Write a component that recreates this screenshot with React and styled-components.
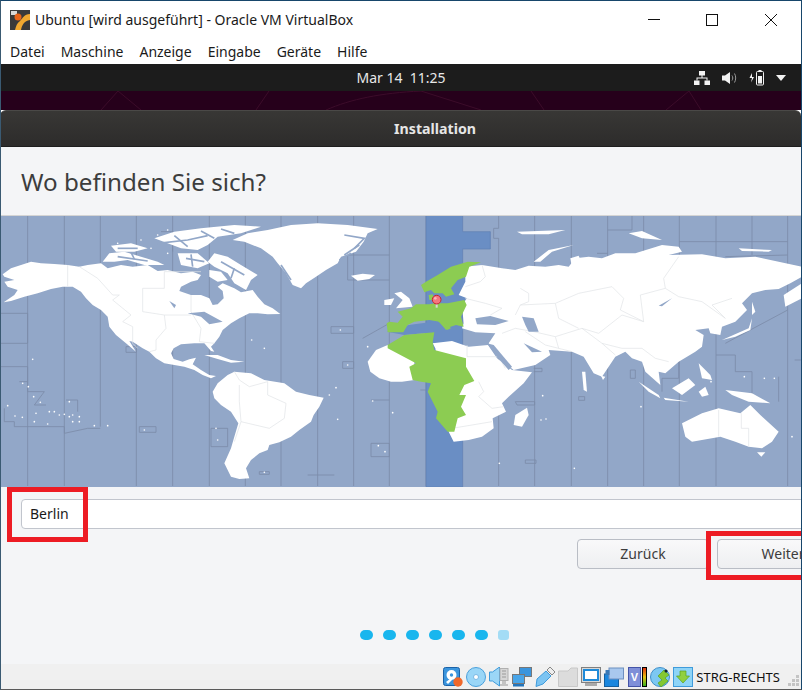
import React from "react";
import styled, { createGlobalStyle } from "styled-components";

const Global = createGlobalStyle`
	html, body {
		margin: 0;
		padding: 0;
		background: #fff;
	}
	body {
		font-family: "Noto Sans", "Open Sans", sans-serif;
	}
`;

const Frame = styled.div`
	position: relative;
	width: 802px;
	height: 690px;
	box-sizing: border-box;
	border: 1px solid #17466b;
	border-bottom-color: #5a5a5a;
	border-left-color: #3a5a72;
	overflow: hidden;
	display: flex;
	flex-direction: column;
	background: #fff;
`;

const TitleBar = styled.div`
	height: 31px;
	box-sizing: border-box;
	padding: 6px 0 0 9px;
	display: flex;
	align-items: center;
	flex-shrink: 0;
`;

const Caption = styled.div`
	flex: 1;
	margin-left: 5px;
	font-size: 14px;
	color: #1a1a1a;
	white-space: nowrap;
`;

const WinButton = styled.div`
	width: 58.5px;
	display: flex;
	align-items: center;
	justify-content: center;
`;

const WinButtons = styled.div`
	display: flex;
	margin-right: 1px;
`;

const MenuBar = styled.div`
	height: 32px;
	display: flex;
	align-items: center;
	gap: 16px;
	padding: 7px 0 0 9px;
	box-sizing: border-box;
	font-size: 14px;
	color: #1a1a1a;
	flex-shrink: 0;
`;

const TopBar = styled.div`
	height: 27px;
	background: #1c1c1c;
	position: relative;
	display: flex;
	align-items: center;
	justify-content: center;
	flex-shrink: 0;
`;

const Clock = styled.div`
	color: #e8e8e8;
	font-size: 14px;
	white-space: pre;
	padding-bottom: 1px;
`;

const Tray = styled.div`
	position: absolute;
	right: 15px;
	top: 0;
	height: 27px;
	display: flex;
	align-items: center;
	gap: 12px;
`;

const Wallpaper = styled.div`
	height: 19px;
	background: #26001b;
	flex-shrink: 0;
	svg { display: block; }
`;

const InstallerHead = styled.div`
	height: 37px;
	background: linear-gradient(#383735, #2d2c2b);
	border-top: 1px solid #4a4947;
	border-bottom: 1px solid #1e1e1e;
	border-radius: 6px 6px 0 0;
	box-sizing: border-box;
	display: flex;
	align-items: center;
	justify-content: center;
	color: #e6e6e6;
	font-size: 14.2px;
	font-weight: 700;
	flex-shrink: 0;
	margin-left: -1px;
	padding-left: 69px;
`;

const Body = styled.div`
	flex: 1;
	background: #f4f5f7;
	display: flex;
	flex-direction: column;
	overflow: hidden;
`;

const Heading = styled.h1`
	margin: 0;
	height: 69px;
	box-sizing: border-box;
	padding: 17px 0 0 20px;
	font-size: 24.2px;
	line-height: 36px;
	font-weight: 400;
	color: #3d3d3d;
	border-bottom: 1px solid #d4d4d4;
	flex-shrink: 0;
`;

const MapBox = styled.div`
	height: 271px;
	flex-shrink: 0;
	background: #92a7c8;
	overflow: hidden;
	svg {
		display: block;
		filter: blur(0.35px);
	}
`;

const SearchRow = styled.div`
	padding: 12px 0 0 20px;
	flex-shrink: 0;
`;

const Search = styled.div`
	width: 830px;
	height: 30px;
	box-sizing: border-box;
	background: #fff;
	border: 1px solid #c1c5cd;
	border-radius: 4px;
	padding: 0 0 2px 8px;
	display: flex;
	align-items: center;
	font-size: 14px;
	color: #1a1a1a;
`;

const Buttons = styled.div`
	display: flex;
	justify-content: flex-end;
	gap: 8px;
	margin: 10px -48px 0 0;
	flex-shrink: 0;
`;

const Button = styled.div`
	width: 132px;
	height: 30px;
	box-sizing: border-box;
	border: 1px solid #b9bdc5;
	border-radius: 4px;
	background: linear-gradient(#f9f9fa, #eeeff1);
	padding-bottom: 2px;
	display: flex;
	align-items: center;
	justify-content: center;
	font-size: 14px;
	color: #3d3d3d;
`;

const Dots = styled.div`
	display: flex;
	align-items: center;
	gap: 10px;
	margin-top: 61px;
	padding-left: 359px;
	flex-shrink: 0;
`;

const Dot = styled.span`
	width: ${p => (p.$todo ? 11 : 13)}px;
	height: 10px;
	border-radius: ${p => (p.$todo ? 3 : 5)}px;
	background: ${p => (p.$todo ? "#a3dcf5" : "#19b6ee")};
`;

const StatusBar = styled.div`
	height: 25px;
	background: #f0f0f0;
	display: flex;
	align-items: center;
	justify-content: flex-end;
	padding-right: 1px;
	flex-shrink: 0;
`;

const StatusIcon = styled.svg`
	width: ${p => p.width || 20}px;
	height: 20px;
	margin-left: ${p => p.$gap ?? 3}px;
	flex-shrink: 0;
`;

const HostKey = styled.div`
	font-size: 13px;
	color: #111;
	margin-left: 3px;
	white-space: nowrap;
`;

const Grip = styled.svg`
	width: 12px;
	height: 12px;
	margin: 8px 0 0 8px;
`;

const Callout = styled.div`
	position: absolute;
	border: 5px solid #ed1c24;
	box-sizing: border-box;
	pointer-events: none;
`;

const BerlinCallout = styled(Callout)`
	left: 6px;
	top: 486px;
	width: 81px;
	height: 55px;
`;

const NextCallout = styled(Callout)`
	left: 705px;
	top: 530px;
	width: 120px;
	height: 49px;
`;

const VBoxLogo = () => (
	<svg width="20" height="20" viewBox="0 0 20 20">
		<rect width="20" height="20" fill="#3a3a3a" />
		<rect x="1" y="1" width="6" height="4" fill="#d8d8d8" />
		<path d="M20 4 C14 4 13 8 10 11 C7 13 6 16 5 20 L11 20 C12 15 14 11 20 10 Z" fill="#f0a830" />
		<circle cx="8" cy="7" r="3.5" fill="#e8641a" />
	</svg>
);

const NetIcon = () => (
	<svg width="16" height="14" viewBox="0 0 16 14" fill="#f2f2f2">
		<rect x="5" y="0" width="6" height="4.5" />
		<rect x="0" y="9.5" width="5.5" height="4.5" />
		<rect x="10.5" y="9.5" width="5.5" height="4.5" />
		<path d="M7.5 4h1v2.5h5v3h-1v-2h-9v2h-1v-3h5z" />
	</svg>
);

const SpeakerIcon = () => (
	<svg width="15" height="14" viewBox="0 0 15 14" fill="none">
		<path d="M0 4.5h3L8 1v12L3 9.5H0z" fill="#f2f2f2" />
		<path d="M10 4.5c1 1.5 1 3.5 0 5M12.5 2.5c1.6 2.8 1.6 6.2 0 9" stroke="#9a9a9a" strokeWidth="1" />
	</svg>
);

const BatteryIcon = () => (
	<svg width="15" height="16" viewBox="0 0 15 16" fill="none">
		<path d="M3 3L0.5 8H3L2 12.5L5 7H3z" fill="#f2f2f2" />
		<rect x="7.5" y="1.5" width="7" height="13.5" rx="1" stroke="#f2f2f2" strokeWidth="1" />
		<rect x="9.5" y="0" width="3" height="1.5" fill="#f2f2f2" />
		<rect x="9" y="6" width="4" height="7.5" fill="#f2f2f2" />
	</svg>
);

const Caret = () => (
	<svg width="10" height="6" viewBox="0 0 10 6">
		<path d="M0 0h10L5 6z" fill="#f2f2f2" />
	</svg>
);

// the map is traced at 3x; west half starts at x 0, east half at x 1203
const westZones = [
	"M80 0V813", "M190 0V813", "M298 0V635", "M406 0V813", "M515 0V813", "M625 0V813", "M733 0V813", "M840 0V813", "M950 0V813",
	"M1058 0V813", "M1165 0V813", "M0 295H80V385H0", "M0 455H80V530H130L100 570H135", "M10 580V620H40V635H190V655L260 640H298",
	"M480 50H515V110", "M1165 120H1040V195H1165", "M1110 555H1165", "M1110 685H1165V725H1110Z", "M990 335H1058V355H990Z",
	"M630 640H680V695H630Z", "M415 635H465V652H415Z", "M1025 440H1058V460H1025Z", "M375 395H406V412H375Z", "M55 500H80", "M195 555H230V590",
	"M920 780H1000", "M1085 370L1165 325", "M775 770H805V778H775Z",
];

const eastZones = [
	"M72 0V813", "M290 0V40H275V70H290V813", "M398 0V813", "M508 0V813", "M617 0V45H690V0M617 45V813", "M725 0V813", "M832 0V813", "M942 0V813",
	"M1050 0V80H942M1157 0V813", "M832 80H942", "M1050 80V120", "M1050 80H1157", "M1157 120L970 125", "M1157 285L970 385", "M1000 420H942", "M1000 420V470H1050V560",
	"M1130 485V560", "M830 440V490H780V530", "M340 560H398V570H345Z", "M370 735H402V745H370Z", "M685 465H700V490H685Z", "M530 545H548V556H530Z",
	"M1178 435H1203V480", "M395 460H420V470H395", "M55 525H72", "M585 115H617",
];

const westLand = [
	// north america
	"M5 178L30 160 60 150 90 140 120 145 160 147 200 150 235 155 260 150 300 145 320 160 360 150 395 155 440 150 470 168 500 165 540 175 575 170 600 180 590 195 570 200 540 215 535 228 570 240 600 240 625 250 635 270 650 268 668 250 665 228 650 215 665 205 700 220 720 232 755 225 770 245 790 268 815 280 838 297 800 298 770 295 745 295 715 310 690 325 665 345 655 365 640 385 630 395 640 410 630 408 610 385 580 385 540 388 518 400 510 415 518 432 545 440 565 433 585 428 575 448 600 465 625 480 645 483 630 490 605 480 580 465 550 455 520 450 490 445 465 430 445 410 425 400 395 380 385 378 405 410 375 385 345 360 325 335 320 305 300 285 275 270 255 250 240 230 215 215 185 215 150 222 110 235 70 245 30 258 8 262 40 240 50 225 20 215 10 200 40 195 10 185Z",
	// arctic islands
	"M305 140L325 115 370 110 420 125 470 140 490 150 430 150 380 135 340 140Z",
	"M330 92L390 85 440 100 400 110 345 110Z",
	"M460 70L520 50 600 40 700 30 780 35 720 55 650 65 620 90 590 105 540 100 500 85Z",
	"M530 115L590 115 625 145 590 160 540 150Z",
	"M640 115L680 125 720 150 770 180 750 195 735 225 700 205 680 175 640 155 620 140Z",
	"M625 165L660 170 680 195 650 200 625 185Z",
	// caribbean
	"M610 420L650 420 690 435 730 440 690 443 650 432Z",
	// greenland, iceland
	"M695 75L740 55 800 45 870 30 950 25 1040 30 1130 42 1100 55 1088 80 1065 110 1020 125 1010 145 975 165 945 185 915 205 900 220 875 210 855 175 830 145 815 125 780 100 730 80Z",
	"M1050 182L1085 176 1122 180 1105 192 1070 197Z",
	// south america
	"M635 530L650 505 680 480 700 470 750 475 790 495 850 505 885 530 925 540 968 548 955 575 938 600 930 620 895 645 870 665 835 682 805 690 800 705 775 715 750 735 735 760 745 790 715 792 690 785 670 745 690 700 700 665 712 625 690 590 660 570 640 550Z",
	// west africa
	"M1100 440L1125 405 1160 390 1240 395 1240 495 1203 500 1170 500 1135 490 1108 470Z",
];

const eastLand = [
	// east africa
	"M92 385L150 378 200 395 258 390 285 430 330 465 390 472 365 505 320 545 300 565 312 590 272 610 275 640 240 665 200 675 155 680 140 650 100 400Z",
	"M335 630L340 600 375 578 380 600 360 635Z",
	// eurasia
	"M190 155L240 150 300 160 340 165 380 152 430 155 470 150 500 155 520 130 560 125 600 130 640 115 700 115 780 90 830 95 840 110 800 120 900 118 970 130 1060 125 1130 140 1200 155 1200 185 1165 205 1130 222 1090 225 1050 235 1020 265 1035 285 1000 320 960 335 955 360 925 355 920 340 880 345 905 360 900 395 880 410 830 440 790 475 770 470 775 510 730 470 720 440 690 430 670 410 640 425 600 485 575 475 545 425 510 410 440 405 445 420 400 450 335 465 290 430 260 385 280 355 220 352 180 340 185 325 180 270 195 250 170 240 190 200Z",
	// russian arctic
	"M395 140L440 105 515 90 450 110 415 140Z",
	"M680 55L720 48 780 75 720 70Z",
	"M1010 100L1110 105 1100 110 1020 108Z",
	"M505 130L530 122 550 170 510 160Z",
	"M345 50L490 45 440 58 360 58Z",
	// far east
	"M1145 240L1200 205 1200 250 1150 275Z",
	"M1050 260L1060 290 1050 300Z",
	"M960 375L1040 340 1050 310 1045 345 1000 365Z",
	// sri lanka, indonesia, philippines
	"M597 482L610 485 603 495Z",
	"M710 500L770 540 775 550 740 530Z",
	"M785 548L860 560 790 555Z",
	"M810 520L860 490 880 510 840 540Z",
	"M890 445L925 480 930 495 900 490Z",
	"M890 530L910 515 920 540 900 545Z",
	"M970 525L1050 535 1105 565 1040 560 990 540Z",
	"M540 470L550 470 555 530 545 525Z",
	// australia
	"M840 625L900 595 950 580 1015 595 1045 570 1075 600 1130 650 1110 680 1080 700 1040 695 1000 680 955 665 870 680 850 665Z",
	"M1065 712L1090 712 1078 725Z",
	// british isles
	"M-23 235L-3 230 22 250 32 275 -18 280 2 255Z",
	"M-53 255L-23 250 -33 270 -53 270Z",
];

// straits cut through the arctic islands
const channels = [
	"M470 85L560 75 620 62", "M520 62L560 95", "M600 48L640 70", "M660 42L700 55", "M350 100L410 100",
	"M350 125L440 138", "M390 112L400 132", "M555 130L610 140", "M570 118L575 155", "M660 140L730 180", "M700 160L690 190",
	"M1030 60L1090 70 1060 100", "M1030 120L1075 90", "M1015 135L1050 115", "M840 150L870 195",
];

const eastBorders = [
	"M240 150L250 185 235 200 190 215", "M190 250L250 265 300 280 265 300", "M355 220L380 235 380 260 355 270 340 300",
	"M355 270L460 265 530 235 630 215 665 250 655 285 725 320 715 240 790 220 785 190 830 125",
	"M790 220L830 245 900 260 970 310 930 270 990 250", "M460 265L470 310 530 340", "M725 320L660 300 590 355 540 340",
	"M340 340L395 350 460 365 470 400", "M460 365L540 340 600 385 660 400 720 400 760 430 800 440", "M600 385L640 420",
	"M195 425H290L310 460", "M230 500L245 530 230 545 270 580 305 575", "M150 640L270 620", "M195 390V425",
	"M950 585V665", "M1018 595V640H1040V695", "M370 350L430 390 510 410", "M300 355L340 340",
];

const westBorders = [
	"M200 150V215", "M235 155L290 190 335 240 355 240 335 255 390 300 365 320 395 335V385L410 400",
	"M425 220H490V170H600", "M425 220V290L490 300 495 340 465 375V405L445 410", "M570 240V290L600 340 595 380 640 385",
	"M490 300H570", "M700 470L715 495 745 515 800 500V540L855 565 850 610 805 640 720 620 715 560 715 510", "M720 620L700 680",
];

const specks = [
	[65, 505], [82, 515], [98, 545], [118, 562], [205, 560], [20, 572], [42, 603], [64, 607], [105, 595], [145, 590], [160, 590], [175, 600], [190, 598], [205, 605], [215, 600], [235, 605], [215, 620], [235, 620], [140, 627], [100, 620], [280, 632], [320, 632], [95, 433],
	[430, 645], [645, 640], [650, 675], [1010, 613], [985, 540], [1005, 518], [1132, 692], [1152, 710], [790, 772], [1018, 345], [1040, 450], [1100, 395], [1115, 558], [1175, 593],
	[1620, 615], [1635, 612], [1495, 745], [1720, 760], [1920, 575], [1625, 542], [2130, 500], [2230, 485], [2290, 490], [2320, 490], [2373, 665],
	[470, 60], [500, 45], [450, 100], [500, 115], [350, 85], [420, 75], [790, 400], [752, 375],
];

const WorldMap = () => (
	<svg width="802" height="271" viewBox="0 3 2406 813">
		<g fill="none" stroke="#7c8ca8" strokeWidth="2.5">
			{westZones.map((d, i) => <path key={i} d={d} />)}
			<g transform="translate(1203 0)">
				{eastZones.map((d, i) => <path key={i} d={d} />)}
			</g>
		</g>
		<g transform="translate(1203 0)">
			{/* selected zone */}
			<path d="M72 0H182V50H265V102H182V816H72Z" fill="#6a8ec4" stroke="#5f7fb2" strokeWidth="2" />
			<path d="M-45 350L20 330 110 318 185 335 170 385 95 385 97 352 7 360Z" fill="#6a8ec4" />
			<path d="M72 230L130 190 195 180 190 262 100 262Z" fill="#6a8ec4" />
		</g>
		<g fill="#fff">
			{westLand.map((d, i) => <path key={i} d={d} />)}
			<g transform="translate(1203 0)">
				{eastLand.map((d, i) => <path key={i} d={d} />)}
			</g>
			{specks.map(([x, y], i) => <circle key={i} cx={x} cy={y} r="2.5" />)}
		</g>
		<g fill="none" stroke="#92a7c8" strokeWidth="5">
			{channels.map((d, i) => <path key={i} d={d} />)}
		</g>
		<g fill="none" stroke="#dfe2e6" strokeWidth="2">
			{westBorders.map((d, i) => <path key={i} d={d} />)}
			<g transform="translate(1203 0)">
				{eastBorders.map((d, i) => <path key={i} d={d} />)}
			</g>
		</g>
		{/* lakes and inland seas */}
		<g fill="#92a7c8">
			<path d="M505 258L525 270 520 280Z" />
			<path d="M560 295L610 290 665 320 625 328 600 305Z" />
			<g transform="translate(1203 0)">
				<path d="M220 310L265 303 320 318 280 330 225 328Z" />
				<path d="M360 305L395 310 410 350 380 350 370 330Z" />
				<path d="M255 385L275 390 330 455 320 465 285 425Z" />
				<path d="M365 385L420 410 390 412Z" />
				<path d="M770 272L810 250 780 274Z" />
			</g>
		</g>
		{/* selected countries */}
		<g fill="#8ccc52" transform="translate(1203 0)">
			<path d="M-43 390L7 360 97 352 92 382 97 405 192 430 192 455 217 498 187 510 172 540 192 540 177 575 192 600 167 610 157 650 137 650 102 610 107 590 77 530 87 505 57 500 32 495 22 455 42 445 -43 400Z" />
			<path d="M-46 325L-38 320 -13 323 2 305 -13 290 27 280 42 268 82 268 97 265 137 265 187 255 194 270 177 305 185 335 162 330 137 338 132 345 112 320 82 315 37 320 17 330 4 352 -43 352Z" />
			<path d="M105 315L125 315 147 340 135 345Z" />
			<path d="M57 210L72 200 107 180 147 155 197 140 237 142 202 155 192 185 167 195 147 220 157 238 132 245 122 235 97 235 87 225 67 232Z" />
			<path d="M80 240L92 238 97 255 82 255Z" />
		</g>
		<rect x="1304" y="260" width="6" height="18" fill="#d8d8d8" />
		<circle cx="1307" cy="254" r="13" fill="#f4777f" stroke="#c8242e" strokeWidth="3" />
		<circle cx="1303" cy="250" r="4" fill="#fbb4b8" />
	</svg>
);

const WallLines = () => (
	<svg width="802" height="19" viewBox="0 0 802 19" fill="none" stroke="#3c0c2a" strokeWidth="1">
		<path d="M100 19L117 0 140 19M255 19L268 0M325 19C350 8 380 2 420 0L480 19M530 0L543 19M665 19L688 0 700 19" />
	</svg>
);

const HddIcon = () => (
	<StatusIcon viewBox="0 0 20 20" $gap={0}>
		<rect x="0.5" y="0.5" width="16" height="18" rx="2" fill="#3b95dd" stroke="#1a62a8" />
		<circle cx="8.5" cy="8" r="5" fill="#fff" />
		<circle cx="8.5" cy="8" r="1.7" fill="#3b95dd" />
		<path d="M3 15L8 11 9 13 5 17Z" fill="#fff" />
		<circle cx="15" cy="15" r="4.7" fill="#f0682a" />
	</StatusIcon>
);

const DiscIcon = () => (
	<StatusIcon viewBox="0 0 20 20">
		<circle cx="10" cy="10" r="9.5" fill="#9ad6f7" stroke="#4aa0dc" />
		<circle cx="10" cy="10" r="2.5" fill="#fff" stroke="#7ab8e4" />
	</StatusIcon>
);

const AudioIcon = () => (
	<StatusIcon viewBox="0 0 20 20">
		<path d="M0.5 5h3l7-5v19l-7-5h-3z" fill="#9bd6f7" stroke="#3f9bdb" />
		<rect x="11" y="1.5" width="8" height="12" fill="#d6d6d6" stroke="#b0b0b0" />
		<path d="M13 14h4v3h2v2h-8v-2h2z" fill="#c4c4c4" />
		<path d="M13 4h4M13 7h4M13 10h4" stroke="#9a9a9a" />
	</StatusIcon>
);

const NetworkIcon = () => (
	<StatusIcon viewBox="0 0 20 20">
		<rect x="7.5" y="0.5" width="12" height="9" fill="#3b95dd" stroke="#777" />
		<rect x="0.5" y="7.5" width="12" height="9" fill="#49a5e8" stroke="#777" />
		<path d="M1 17h11v2.5H1z" fill="#2274bb" />
	</StatusIcon>
);

const UsbIcon = () => (
	<StatusIcon viewBox="0 0 20 20">
		<path d="M1 19.5L2 12 11 4 16 9 8 17Z" fill="#7cc4f2" stroke="#3f9bdb" />
		<path d="M12 3L15 0 20 5 17 8Z" fill="#eee" stroke="#888" />
	</StatusIcon>
);

const FolderIcon = () => (
	<StatusIcon viewBox="0 0 20 20">
		<path d="M0.5 4H10L13 1H19.5V19.5H0.5Z" fill="#dcdcdc" stroke="#c8c8c8" />
	</StatusIcon>
);

const DisplayIcon = () => (
	<StatusIcon viewBox="0 0 20 20">
		<rect x="0.5" y="0.5" width="19" height="15" fill="#d8d8d8" stroke="#808080" />
		<rect x="3" y="3" width="14" height="10" fill="#fff" stroke="#1f8ad8" strokeWidth="2" />
		<path d="M4 16h12v3H4z" fill="#a9a9a9" />
	</StatusIcon>
);

const CaptureIcon = () => (
	<StatusIcon viewBox="0 0 20 20">
		<rect x="0.5" y="7" width="14" height="12.5" fill="#1b87de" stroke="#15609f" />
		<rect x="5" y="1" width="14.5" height="11" fill="#a9c8ee" stroke="#6d8fc0" />
		<rect x="1.5" y="3" width="4" height="5" fill="#3a78b5" />
	</StatusIcon>
);

const ChipIcon = () => (
	<StatusIcon viewBox="0 0 15 20" width={15}>
		<rect x="1.5" y="0.5" width="12" height="19" fill="#7f8fd8" stroke="#4454a8" />
		<text x="7.5" y="14" fontSize="11" fontWeight="700" textAnchor="middle" fill="#fff" fontFamily="Liberation Sans">V</text>
	</StatusIcon>
);

const MeterIcon = () => (
	<StatusIcon viewBox="0 0 5 20" width={5} $gap={0}>
		<defs>
			<linearGradient id="meter" x1="0" y1="0" x2="0" y2="1">
				<stop offset="0" stopColor="#e02a10" />
				<stop offset="0.5" stopColor="#e8c010" />
				<stop offset="1" stopColor="#30b020" />
			</linearGradient>
		</defs>
		<rect x="0.5" y="0.5" width="4" height="19" fill="url(#meter)" stroke="#000" />
	</StatusIcon>
);

const MouseIcon = () => (
	<StatusIcon viewBox="0 0 22 20" width={22}>
		<circle cx="10" cy="10" r="9.5" fill="#7cc8f2" stroke="#3f8fcb" />
		<path d="M8 9L14 3 19 8 15 11 18 14 11 20 8 16 12 13Z" fill="#84c832" stroke="#4f9a18" strokeWidth="0.6" />
		<circle cx="16" cy="4" r="1.5" fill="#123" />
	</StatusIcon>
);

const ArrowIcon = () => (
	<StatusIcon viewBox="0 0 20 20" $gap={1}>
		<rect x="0.5" y="0.5" width="19" height="19" fill="#8ed4f7" stroke="#3f9bdb" />
		<path d="M7 4h6v5h3.5L10 16 3.5 9H7z" fill="#90d040" stroke="#5aa020" strokeWidth="0.7" />
	</StatusIcon>
);

const App = () => {
	return <>
		<Global />
		<Frame>
			<TitleBar>
				<VBoxLogo />
				<Caption>Ubuntu [wird ausgeführt] - Oracle VM VirtualBox</Caption>
				<WinButtons>
					<WinButton>
						<svg width="12" height="12" viewBox="0 0 12 12"><path d="M0 5.5h12" stroke="#111" /></svg>
					</WinButton>
					<WinButton>
						<svg width="12" height="12" viewBox="0 0 12 12"><rect x="0.5" y="0.5" width="11" height="11" fill="none" stroke="#111" /></svg>
					</WinButton>
					<WinButton>
						<svg width="12" height="12" viewBox="0 0 12 12"><path d="M0 0L12 12M12 0L0 12" stroke="#111" /></svg>
					</WinButton>
				</WinButtons>
			</TitleBar>
			<MenuBar>
				<span>Datei</span>
				<span>Maschine</span>
				<span>Anzeige</span>
				<span>Eingabe</span>
				<span>Geräte</span>
				<span>Hilfe</span>
			</MenuBar>
			<TopBar>
				<Clock>{"Mar 14  11:25"}</Clock>
				<Tray>
					<NetIcon />
					<SpeakerIcon />
					<BatteryIcon />
					<Caret />
				</Tray>
			</TopBar>
			<Wallpaper><WallLines /></Wallpaper>
			<InstallerHead>Installation</InstallerHead>
			<Body>
				<Heading>Wo befinden Sie sich?</Heading>
				<MapBox><WorldMap /></MapBox>
				<SearchRow><Search>Berlin</Search></SearchRow>
				<Buttons>
					<Button>Zurück</Button>
					<Button>Weiter</Button>
				</Buttons>
				<Dots>
					{[0, 1, 2, 3, 4, 5].map(i => <Dot key={i} />)}
					<Dot $todo />
				</Dots>
			</Body>
			<StatusBar>
				<HddIcon />
				<DiscIcon />
				<AudioIcon />
				<NetworkIcon />
				<UsbIcon />
				<FolderIcon />
				<DisplayIcon />
				<CaptureIcon />
				<ChipIcon />
				<MeterIcon />
				<MouseIcon />
				<ArrowIcon />
				<HostKey>STRG-RECHTS</HostKey>
				<Grip viewBox="0 0 12 12" fill="#c4c4c4">
					<rect x="8" y="0" width="3" height="3" />
					<rect x="4" y="4" width="3" height="3" />
					<rect x="8" y="4" width="3" height="3" />
					<rect x="0" y="8" width="3" height="3" />
					<rect x="4" y="8" width="3" height="3" />
					<rect x="8" y="8" width="3" height="3" />
				</Grip>
			</StatusBar>
			<BerlinCallout />
			<NextCallout />
		</Frame>
	</>
}

export default App;
